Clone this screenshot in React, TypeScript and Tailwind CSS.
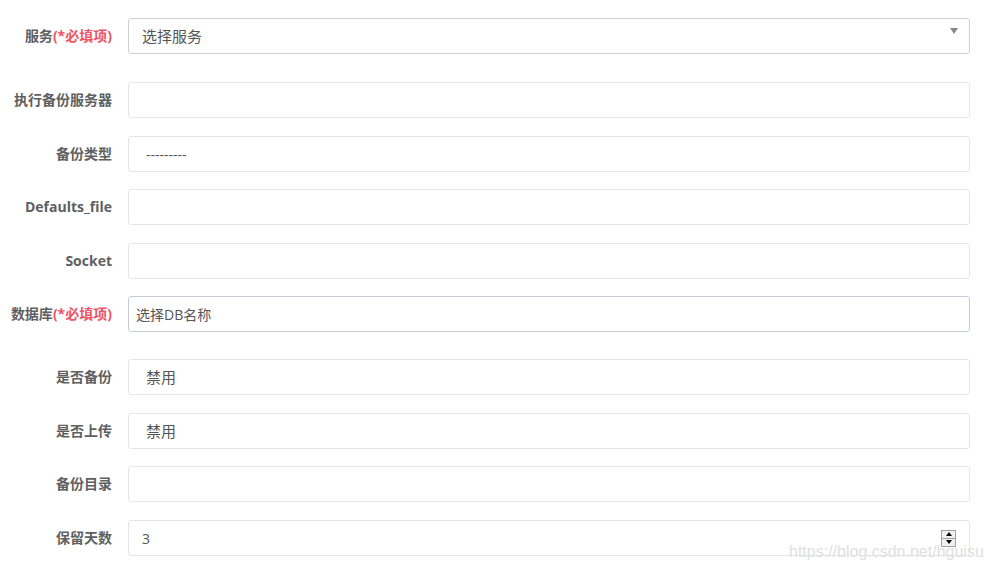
import React from "react";

const labelCls =
  "w-[112px] shrink-0 text-right text-[14px] font-bold text-[#5e6062] leading-none";
const font = { fontFamily: '"Open Sans", "Noto Sans CJK SC", sans-serif' };

function Row({
  label,
  required,
  mt,
  children,
}: {
  label: string;
  required?: boolean;
  mt: string;
  children: React.ReactNode;
}) {
  return (
    <div className={`flex items-center gap-4 pr-[20px] ${mt}`}>
      <div className={labelCls}>
        {label}
        {required && <span className="text-[#ed5565]">(*必填项)</span>}
      </div>
      {children}
    </div>
  );
}

const boxCls =
  "flex-1 h-[36px] rounded-[3px] border bg-white flex items-center text-[15px] text-[#555]";

export default function App() {
  return (
    <div
      className="relative w-[990px] h-[572px] bg-white overflow-hidden pt-[18px]"
      style={font}
    >
      <Row label="服务" required mt="mt-0">
        <div className={`${boxCls} border-[#cfcfcf] pl-[13px] pr-[11px] justify-between`}>
          <span>选择服务</span>
          <svg width="8" height="6" viewBox="0 0 8 6" className="mb-[10px]">
            <polygon points="0,0 8,0 4,6" fill="#888" />
          </svg>
        </div>
      </Row>
      <Row label="执行备份服务器" mt="mt-[28px]">
        <div className={`${boxCls} border-[#e5e6e7]`} />
      </Row>
      <Row label="备份类型" mt="mt-[18px]">
        <div className={`${boxCls} border-[#e5e6e7] pl-[17px]`}>
          <span className="text-[14px]">---------</span>
        </div>
      </Row>
      <Row label="Defaults_file" mt="mt-[17px]">
        <div className={`${boxCls} border-[#e5e6e7]`} />
      </Row>
      <Row label="Socket" mt="mt-[18px]">
        <div className={`${boxCls} border-[#e5e6e7]`} />
      </Row>
      <Row label="数据库" required mt="mt-[17px]">
        <div className={`${boxCls} border-[#c5ced8] pl-[7px]`}>
          <span className="text-[14px]">选择DB名称</span>
        </div>
      </Row>
      <Row label="是否备份" mt="mt-[27px]">
        <div className={`${boxCls} border-[#e5e6e7] pl-[17px]`}>
          <span>禁用</span>
        </div>
      </Row>
      <Row label="是否上传" mt="mt-[18px]">
        <div className={`${boxCls} border-[#e5e6e7] pl-[17px]`}>
          <span>禁用</span>
        </div>
      </Row>
      <Row label="备份目录" mt="mt-[17px]">
        <div className={`${boxCls} border-[#e5e6e7]`} />
      </Row>
      <Row label="保留天数" mt="mt-[18px]">
        <div className={`${boxCls} border-[#e5e6e7] pl-[13px] pr-[13px] justify-between`}>
          <span className="text-[14px]">3</span>
          <div className="flex flex-col w-[15px] h-[17px] border border-[#a0a0a0] bg-[#f0f0f0]">
            <div className="flex-1 flex items-center justify-center border-b border-[#a0a0a0]">
              <svg width="6" height="4" viewBox="0 0 6 4">
                <polygon points="0,4 6,4 3,0" fill="#000" />
              </svg>
            </div>
            <div className="flex-1 flex items-center justify-center">
              <svg width="6" height="4" viewBox="0 0 6 4">
                <polygon points="0,0 6,0 3,4" fill="#000" />
              </svg>
            </div>
          </div>
        </div>
      </Row>
      <div
        className="absolute left-[789px] top-[544px] text-[16px] text-[#e0e0e0] leading-none"
        style={{ fontFamily: '"Liberation Sans", Arial, sans-serif' }}
      >
        https://blog.csdn.net/hguisu
      </div>
    </div>
  );
}
